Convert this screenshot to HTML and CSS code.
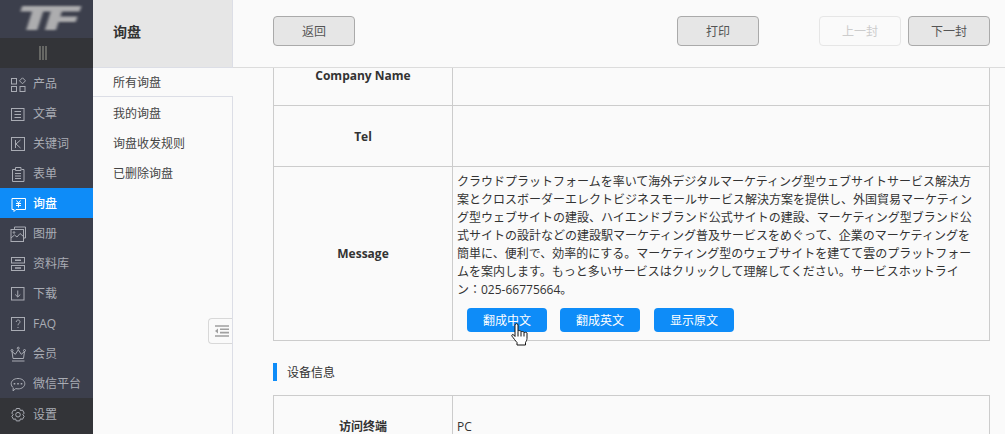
FILE: index.html
```html
<!DOCTYPE html>
<html lang="zh">
<head>
<meta charset="utf-8">
<title>询盘</title>
<link rel="stylesheet" href="styles.css">
</head>
<body>
<div class="app">
  <aside class="side">
    <div class="logo"><span class="logo-text">TF</span></div>
    <div class="toggle"><svg width="8" height="14" viewBox="0 0 8 14"><path d="M1 0v14M4 0v14M7 0v14" class="ico-toggle"/></svg></div>
    <nav class="menu">
      <a class="item"><svg class="ico" viewBox="0 0 16 16"><rect x="1.500" y="2.500" width="5" height="5.500"/><path d="M12.500 1.800l3 3-3 3-3-3z"/><rect x="1.500" y="10.500" width="5" height="5"/><rect x="10" y="10.500" width="5" height="5"/></svg><span class="lbl">产品</span></a>
      <a class="item"><svg class="ico" viewBox="0 0 16 16"><rect x="1.500" y="2.500" width="12.500" height="12"/><path d="M4.500 5.500h6.500M4.500 8.500h6.500M4.500 11.500h6.500"/></svg><span class="lbl">文章</span></a>
      <a class="item"><svg class="ico" viewBox="0 0 16 16"><rect x="1.500" y="1.500" width="13" height="13"/><path d="M5.500 4v8M10.500 4L6 8l4.500 4"/></svg><span class="lbl">关键词</span></a>
      <a class="item"><svg class="ico" viewBox="0 0 16 16"><path d="M5 3.500H2.500v12h11.500v-12H11.500M5.500 4.500V1.500h5.500v3z"/><path d="M5 7.500h6M5 10h6M5 12.500h6"/></svg><span class="lbl">表单</span></a>
      <a class="item active"><svg class="ico" viewBox="0 0 16 16"><path d="M2 2.500h13.500v11H6l-2 2v-2H2z"/><path d="M6.500 4.500l2 2.500 2-2.500M8.500 7v4.500M6 7.500h5M6 9.500h5"/></svg><span class="lbl">询盘</span></a>
      <a class="item"><svg class="ico" viewBox="0 0 16 16"><path d="M4.500 3.500v-2.500h11v11h-2"/><rect x="1" y="3.500" width="12.500" height="12"/><path d="M1 12l3.500-3 2.500 2 3-3.500 3.500 3"/><circle cx="4" cy="6.500" r=".8"/></svg><span class="lbl">图册</span></a>
      <a class="item"><svg class="ico" viewBox="0 0 16 16"><rect x="1.500" y="1.500" width="13" height="5.500"/><rect x="1.500" y="9.500" width="13" height="5"/><path d="M5 4.200h6M5 12h6" class="thick"/></svg><span class="lbl">资料库</span></a>
      <a class="item"><svg class="ico" viewBox="0 0 16 16"><rect x="1.500" y="1.500" width="12.500" height="12.500"/><path d="M7.750 4.500v6.500M5.200 8.500l2.550 2.500 2.550-2.500"/></svg><span class="lbl">下载</span></a>
      <a class="item"><svg class="ico" viewBox="0 0 16 16"><rect x="1.500" y="1.500" width="13" height="13"/><path d="M6.200 6c0-2.600 3.800-2.600 3.800-.2 0 1.500-2 1.600-2 3.500M8 11v1"/></svg><span class="lbl">FAQ</span></a>
      <a class="item"><svg class="ico" viewBox="0 0 16 16"><path d="M2 5.500l1 7h10.500l1-7-3.200 2.800-3-4.500-3 4.500z"/><path d="M2 15h12.500"/><circle cx="2" cy="4.500" r="1"/><circle cx="8.250" cy="2.200" r="1"/><circle cx="14.500" cy="4.500" r="1"/></svg><span class="lbl">会员</span></a>
      <a class="item"><svg class="ico" viewBox="0 0 16 16"><path d="M8 2.500c4 0 6.800 2.300 6.800 5.200s-2.800 5.200-6.800 5.200c-.8 0-1.500-.1-2.200-.3L3 14.800l.3-3C2 10.800 1.200 9.300 1.200 7.700 1.200 4.800 4 2.500 8 2.500z"/><path d="M4.500 7v1.500M8 7v1.500M11.500 7v1.500" class="thick"/></svg><span class="lbl">微信平台</span></a>
    </nav>
    <a class="item settings"><svg class="ico" viewBox="0 0 16 16"><path d="M6.300 1.500h3.400l.7 2 2.100-.4 1.700 3-1.400 1.600 1.400 1.600-1.700 3-2.100-.4-.7 2H6.300l-.7-2-2.100.4-1.700-3 1.400-1.600L1.800 6.100l1.700-3 2.100.4z"/><circle cx="8" cy="7.700" r="2.300"/></svg><span class="lbl">设置</span></a>
  </aside>

  <section class="sub">
    <h2 class="sub-head">询盘</h2>
    <a class="sub-active">所有询盘</a>
    <div class="sub-rest">
      <a class="sub-item">我的询盘</a>
      <a class="sub-item">询盘收发规则</a>
      <a class="sub-item">已删除询盘</a>
      <button class="collapse" type="button" aria-label="收起"><svg width="15" height="12" viewBox="0 0 15 12"><path d="M1 1h14M6 4.300h9M6 7.600h9M1 11h14" class="ico-collapse"/><path d="M1 6l3-2.500v5z" class="ico-collapse-fill"/></svg></button>
    </div>
  </section>

  <main class="main">
    <header class="top">
      <button class="btn" type="button">返回</button>
      <div class="top-right">
        <button class="btn print" type="button">打印</button>
        <button class="btn disabled" type="button">上一封</button>
        <button class="btn" type="button">下一封</button>
      </div>
    </header>
    <div class="content">
      <table class="tbl first">
        <tr class="row"><th>Company Name</th><td></td></tr>
        <tr class="row"><th>Tel</th><td></td></tr>
        <tr>
          <th>Message</th>
          <td class="msg">
            <p class="msg-text" lang="ja">クラウドプラットフォームを率いて海外デジタルマーケティング型ウェブサイトサービス解決方案とクロスボーダーエレクトビジネスモールサービス解決方案を提供し、外国貿易マーケティング型ウェブサイトの建設、ハイエンドブランド公式サイトの建設、マーケティング型ブランド公式サイトの設計などの建設駅マーケティング普及サービスをめぐって、企業のマーケティングを簡単に、便利で、効率的にする。マーケティング型のウェブサイトを建てて雲のプラットフォームを案内します。もっと多いサービスはクリックして理解してください。サービスホットライ<span class="nowrap">ン：025-66775664。</span></p>
            <div class="actions">
              <button class="act" type="button">翻成中文<svg class="hand" width="18" height="23" viewBox="0 0 18 23"><path d="M4 2c0-1.800 3-1.800 3 0v6.500c0-1.200 3-1.200 3 0v.8c0-1 3-1 3 0v.7c0-1 3-1 3 0v5.500c0 1.500-1 3-1.500 4V22H6v-2.500C4.500 18 2.500 15 1 13.200c-.8-1.200.7-2.300 1.700-1.300L4 13.500z"/><path d="M7 9v4.500M10 9.500v4M13 10v3.500"/></svg></button>
              <button class="act" type="button">翻成英文</button>
              <button class="act last" type="button">显示原文</button>
            </div>
          </td>
        </tr>
      </table>
      <h3 class="sec">设备信息</h3>
      <table class="tbl">
        <tr class="row"><th>访问终端</th><td>PC</td></tr>
      </table>
    </div>
  </main>
</div>
</body>
</html>
```

FILE: styles.css
```css
* { box-sizing: border-box; }
html, body { margin: 0; padding: 0; height: 100%; overflow: hidden; }
body {
  background: #fafafa;
  color: #333;
  font: 12px/18px "Open Sans", "Noto Sans CJK SC", sans-serif;
  text-spacing-trim: space-all;
}
.app { display: flex; width: 1005px; height: 434px; }

/* sidebar */
.side { width: 93px; flex: none; background: #3c3f4c; display: flex; flex-direction: column; }
.logo { height: 38px; display: flex; justify-content: center; align-items: center; padding-right: 1px; overflow: hidden; }
.logo-text {
  font: italic 900 31px/38px "Liberation Sans", sans-serif;
  color: #adadaf;
  -webkit-text-stroke: 2px #adadaf;
  filter: blur(1px);
  transform: scaleX(1.7);
  letter-spacing: -3px;
}
.toggle { height: 30px; background: #333438; display: flex; align-items: center; justify-content: center; padding-right: 7px; }
.ico-toggle { fill: none; stroke: #9a9a90; stroke-width: 1; }
.menu { flex: 1; }
.item { display: flex; align-items: center; height: 30px; padding: 2px 0 0 10px; gap: 7px; color: #a9acb4; font-size: 12px; }
.item.active { background: #0e8cf8; color: #fff; }
.item.active .lbl { font-weight: 500; }
.item.settings { height: 36px; padding-bottom: 4px; background: #333438; }
.ico { width: 16px; height: 16px; flex: none; fill: none; stroke: currentColor; stroke-width: 1; }
.ico .thick { stroke-width: 1.6; }

/* second column */
.sub { width: 140px; flex: none; display: flex; flex-direction: column; }
.sub-head {
  margin: 0; height: 68px; background: #e6e6e6;
  border-right: 1px solid #dcdee6; border-bottom: 1px solid #dcdee6;
  padding-left: 20px; font-size: 14px; font-weight: 700; line-height: 64px; color: #333;
}
.sub-active { display: block; height: 28px; padding-left: 20px; line-height: 30px; color: #444; }
.sub-rest { flex: 1; padding-top: 1px; border-top: 1px solid #dcdee6; border-right: 1px solid #dcdee6; position: relative; }
.sub-item { display: block; height: 30px; padding-left: 20px; line-height: 32px; color: #444; }
.collapse {
  position: absolute; right: 0; top: 221px; width: 24px; height: 26px; padding: 0 0 0 2px;
  display: flex; align-items: center; justify-content: center;
  background: #fafafa; border: 1px solid #d8d8d8; border-right: 0; border-radius: 4px 0 0 4px;
}
.ico-collapse { fill: none; stroke: #a0a0a0; stroke-width: 1.6; }
.ico-collapse-fill { fill: #a0a0a0; }

/* main */
.main { flex: 1; min-width: 0; display: flex; flex-direction: column; }
.top { height: 68px; flex: none; border-bottom: 1px solid #dcdcdc; padding: 16px 15px 0 40px; display: flex; justify-content: space-between; align-items: flex-start; }
.top-right { display: flex; gap: 7px; }
.btn {
  width: 82px; height: 30px; padding: 2px 0 0; background: #e6e6e6; color: #555;
  border: 1px solid #aaa; border-radius: 4px; font: inherit;
}
.btn.print { margin-right: 53px; }
.btn.disabled { background: #fafafa; border-color: #e6e6e6; color: #ccc; }

.content { flex: 1; min-height: 0; overflow: hidden; padding: 0 15px 0 40px; }
.tbl { width: 717px; border-collapse: collapse; table-layout: fixed; }
.tbl.first { margin-top: -24px; }
.tbl th, .tbl td { border: 1px solid #ccc; padding: 0; }
.tbl th { width: 179px; font-weight: 700; color: #333; text-align: center; }
.tbl td { padding-left: 4px; color: #333; vertical-align: middle; }
.row { height: 61px; }
.tbl .row th, .tbl .row td { padding-top: 2px; }
.tbl td.msg { padding: 5px 10px 8px 4px; height: 174px; }
.msg-text { margin: 0; font-family: "Open Sans", "Noto Sans CJK JP", sans-serif; }
.nowrap { white-space: nowrap; }
.actions { display: flex; gap: 13px; margin: 9px 0 0 10px; }
.act {
  position: relative; width: 80px; height: 24px; padding: 2px 0 0; border: 0; border-radius: 4px;
  background: #0e8cf8; color: #fff; font: inherit;
}
.act.last { margin-left: 1px; }
.hand { position: absolute; left: 44px; top: 15px; fill: #fff; stroke: #111; stroke-width: 1; }

.sec { display: flex; align-items: center; height: 18px; margin: 22px 0 14px; padding: 2px 0 0 10px; border-left: 4px solid #0e8cf8; font-size: 12px; font-weight: 400; color: #333; }
```
